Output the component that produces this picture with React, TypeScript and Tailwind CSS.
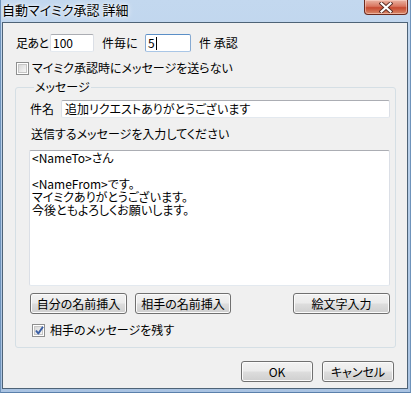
import React from 'react';

// ボタン（Vista風）
function WinButton({ label, className = '' }: { label: string; className?: string }) {
  return (
    <button
      type="button"
      className={`h-[21px] whitespace-nowrap rounded-[3px] border border-[#707070] bg-[linear-gradient(#f2f2f2_0%,#ebebeb_48%,#dddddd_52%,#cfcfcf_100%)] shadow-[inset_0_0_0_1px_#fbfbfb] text-[12px] leading-[14px] text-black ${className}`}
    >
      {label}
    </button>
  );
}

// チェックボックス
function CheckBox({ checked }: { checked?: boolean }) {
  return (
    <span className="relative flex h-[13px] w-[13px] shrink-0 items-center justify-center border border-[#8e8f8f] bg-white">
      <span className="h-[9px] w-[9px] border border-[#c6c6c6] bg-[linear-gradient(135deg,#d9d9d9,#f6f6f6)]" />
      {checked && (
        <svg className="absolute left-[1px] top-[0px]" width="11" height="11" viewBox="0 0 11 11">
          <path d="M2 5.5 L4.3 8.5 L9 1.8" fill="none" stroke="#3b5fa4" strokeWidth="2" strokeLinejoin="round" />
        </svg>
      )}
    </span>
  );
}

// テキストボックス
function TextBox({ value, className = '', focused, caret }: { value: string; className?: string; focused?: boolean; caret?: boolean }) {
  return (
    <div
      className={`flex h-[18px] shrink-0 items-center rounded-[2px] border bg-white pl-[2px] text-[12px] leading-[14px] whitespace-nowrap ${
        focused
          ? 'border-[#5b8fc7] border-b-[#a9c6e6] border-x-[#86aad2]'
          : 'border-[#abadb3] border-b-[#e3e9ef] border-x-[#dbdfe6]'
      } ${className}`}
    >
      <span>{value}</span>
      {caret && <span className="ml-[1px] h-[13px] w-[1px] bg-black" />}
    </div>
  );
}

export default function App() {
  const bodyLines = ['<NameTo>さん', '', '<NameFrom>です。', 'マイミクありがとうございます。', '今後ともよろしくお願いします。'];

  return (
    <div className="flex h-[393px] w-[411px] flex-col overflow-hidden border-x border-b border-x-[#6f93bb] border-b-[#5a80ab] bg-[linear-gradient(#c3d8ef,#b9d0ea_40%,#a9c3e2)] font-['Noto_Sans_CJK_JP',sans-serif] text-black [font-feature-settings:'palt']">
      {/* タイトルバー */}
      <div className="flex h-[22px] shrink-0 items-start justify-between">
        <span className="ml-[1px] mt-[1px] whitespace-nowrap text-[13px] leading-[17px] [text-shadow:0_0_6px_#ffffff,0_0_3px_#ffffff]">
          自動マイミク承認 詳細
        </span>
        <div className="mr-[2px] flex h-[15px] w-[44px] items-center justify-center rounded-b-[4px] border border-t-0 border-[#6b2a1e] bg-[linear-gradient(#eab4a3_0%,#d9765f_45%,#c74a30_55%,#d98b6c_100%)] shadow-[inset_0_0_0_1px_rgba(255,220,210,0.5)]">
          <svg width="14" height="11" viewBox="0 0 14 11">
            <path d="M2.5 1.5 L11.5 9.5 M11.5 1.5 L2.5 9.5" stroke="#5a2d25" strokeWidth="4" strokeLinecap="square" />
            <path d="M2.5 1.5 L11.5 9.5 M11.5 1.5 L2.5 9.5" stroke="#ffffff" strokeWidth="2.2" strokeLinecap="square" />
          </svg>
        </div>
      </div>

      {/* クライアント領域 */}
      <div className="mb-[3px] ml-[1px] mr-[2px] flex flex-1 flex-col border border-[#4e6377] bg-[#f0f0f0] pl-[12px] pr-[11px] pt-[11px] text-[12px] leading-[14px]">
        {/* 件数設定 */}
        <div className="flex h-[18px] items-center whitespace-nowrap">
          <span className="ml-[1px] w-[34px] shrink-0 tracking-[-0.7px]">足あと</span>
          <TextBox value="100" className="w-[44px]" />
          <span className="ml-[8px] w-[43px] shrink-0">件毎に</span>
          <TextBox value="5" className="w-[46px]" focused caret />
          <span className="ml-[8px]">件 承認</span>
        </div>

        <div className="mt-[9px] flex items-center gap-[3px] whitespace-nowrap">
          <span className="ml-[1px]"><CheckBox /></span>
          <span>マイミク承認時にメッセージを送らない</span>
        </div>

        {/* メッセージ グループ */}
        <fieldset className="mt-[5px] rounded-[3px] border border-[#d5dfe5] pb-[10px] pl-[14px] pr-[5px]">
          <legend className="ml-[4px] px-[1px] text-[12px] leading-[14px]">メッセージ</legend>

          <div className="mt-[6px] flex h-[18px] items-center whitespace-nowrap">
            <span className="w-[31px] shrink-0">件名</span>
            <TextBox value="追加リクエストありがとうございます" className="flex-1 pl-[3px]" />
          </div>

          <div className="mt-[9px] whitespace-nowrap pl-[1px]">送信するメッセージを入力してください</div>

          <div className="ml-[-1px] mt-[9px] h-[136px] rounded-[2px] border border-[#abadb3] border-b-[#e3e9ef] border-x-[#dbdfe6] bg-white pl-[2px] text-[12px] leading-[13px]">
            {bodyLines.map((line, i) => (
              <div key={i} className="h-[13px] whitespace-pre leading-[13px]">
                {line}
              </div>
            ))}
          </div>

          <div className="mt-[7px] flex items-center">
            <WinButton label="自分の名前挿入" className="w-[97px]" />
            <WinButton label="相手の名前挿入" className="ml-[8px] w-[96px]" />
            <WinButton label="絵文字入力" className="ml-auto w-[97px]" />
          </div>

          <div className="mt-[9px] flex items-center gap-[5px] whitespace-nowrap">
            <span className="ml-[2px]"><CheckBox checked /></span>
            <span>相手のメッセージを残す</span>
          </div>
        </fieldset>

        {/* OK / キャンセル */}
        <div className="mr-[2px] mt-[13px] flex justify-end gap-[9px]">
          <WinButton label="OK" className="w-[72px]" />
          <WinButton label="キャンセル" className="w-[72px]" />
        </div>
      </div>
    </div>
  );
}
